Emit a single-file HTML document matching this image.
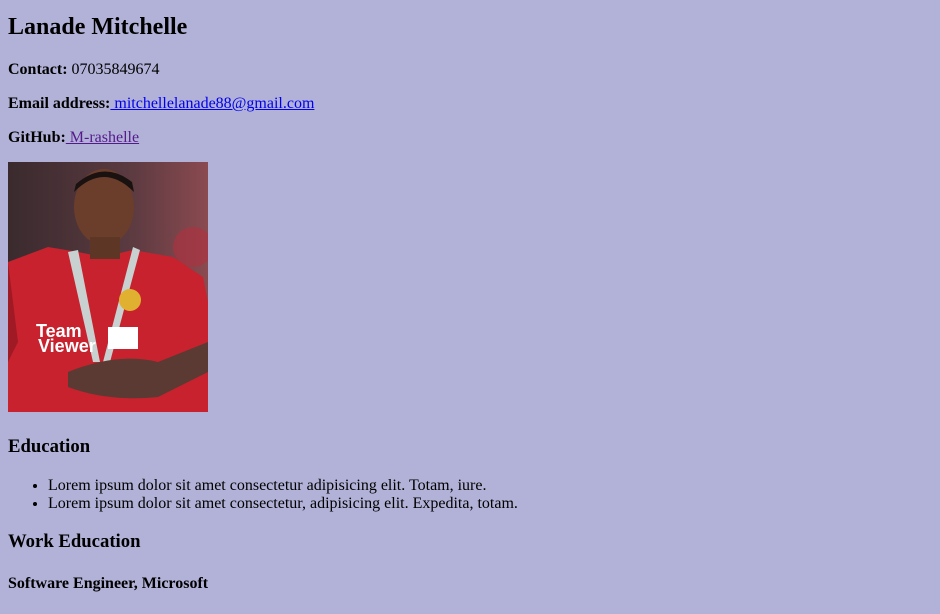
<!DOCTYPE html>
<html><head><meta charset="utf-8"><style>
body{margin:8px;background:#b2b2d8;font-family:"Liberation Serif",serif;font-size:16px;color:#000}
h2{margin-top:14px}
a{color:#0000ee}
a.v{color:#551a8b}
.img{width:200px;height:250px;display:block;margin-top:-1px;margin-bottom:24px}
</style></head><body>
<h2>Lanade Mitchelle</h2>
<p><b>Contact:</b> 07035849674</p>
<p><b>Email address:</b><a href="#"> mitchellelanade88@gmail.com</a></p>
<p><b>GitHub:</b><a class="v" href="#"> M-rashelle</a></p>
<svg class="img" viewBox="0 0 200 250" xmlns="http://www.w3.org/2000/svg">
<defs><linearGradient id="bg" x1="0" y1="0" x2="1" y2="0"><stop offset="0" stop-color="#3a2a2e"/><stop offset="0.6" stop-color="#5a3a40"/><stop offset="1" stop-color="#8a4a50"/></linearGradient></defs>
<rect width="200" height="250" fill="url(#bg)"/>
<circle cx="185" cy="85" r="20" fill="#b03040" opacity=".6"/>
<path d="M0 100 L40 85 L70 90 L95 95 L125 88 L165 95 L195 115 L200 140 L200 250 L0 250 Z" fill="#c8222e"/>
<path d="M0 100 L10 180 L0 200 Z" fill="#a01a25"/>
<ellipse cx="96" cy="45" rx="30" ry="38" fill="#6b3e2c"/>
<path d="M66 30 Q96 0 126 30 L124 20 Q96 -2 68 22 Z" fill="#1a1210"/>
<rect x="82" y="75" width="30" height="22" fill="#5e3626"/>
<path d="M60 90 L85 200 L92 200 L70 88 Z M125 85 L95 200 L102 200 L132 88 Z" fill="#c8d0d0"/>
<circle cx="122" cy="138" r="11" fill="#e0b030"/>
<text x="28" y="175" font-family="Liberation Sans" font-weight="bold" font-size="18" fill="#fff">Team</text>
<text x="30" y="190" font-family="Liberation Sans" font-weight="bold" font-size="18" fill="#fff">Viewer</text>
<rect x="100" y="165" width="30" height="22" fill="#fff"/>
<path d="M60 210 Q110 190 150 200 L200 180 L200 210 L150 235 Q100 240 60 225 Z" fill="#5a3a32"/>
</svg>
<h3>Education</h3>
<ul>
<li>Lorem ipsum dolor sit amet consectetur adipisicing elit. Totam, iure.</li>
<li>Lorem ipsum dolor sit amet consectetur, adipisicing elit. Expedita, totam.</li>
</ul>
<h3>Work Education</h3>
<h4>Software Engineer, Microsoft</h4>
</body></html>
